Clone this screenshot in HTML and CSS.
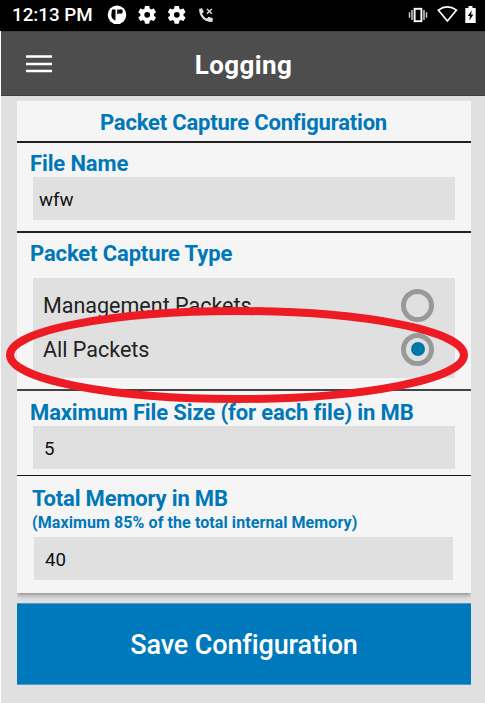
FILE: index.html
```html
<!DOCTYPE html>
<html lang="en">
<head>
<meta charset="utf-8">
<title>Logging</title>
<link rel="stylesheet" href="styles.css">
</head>
<body>
<div class="screen">
  <div class="status">
    <span class="clock">12:13 PM</span>
    <svg class="status-left" width="110" height="31" viewBox="0 0 110 31">
      <circle cx="10" cy="14.800" r="9.300" fill="#fff"/>
      <path d="M5 9.500h3.500v11c-2.500-.8-4.200-2.700-4.200-5.500zM10.200 9.500h1.500v4.500h-1.500z" fill="#000"/>
      <circle cx="13.500" cy="11.500" r="2.300" fill="#000"/>
      <g id="gear" transform="translate(29.400 4) scale(.9)">
        <path fill="#fff" d="M19.400 13c0-.3.100-.6.100-1s0-.7-.1-1l2.100-1.600c.2-.2.200-.4.100-.6l-2-3.500c-.1-.2-.4-.3-.6-.2l-2.500 1c-.5-.4-1.100-.7-1.700-1l-.4-2.600c0-.2-.2-.4-.5-.4h-4c-.2 0-.5.200-.5.400L9 5.100c-.6.300-1.100.6-1.700 1l-2.500-1c-.2-.1-.5 0-.6.200l-2 3.500c-.1.200-.1.500.1.600L4.500 11c0 .3-.1.700-.1 1s0 .7.100 1l-2.200 1.600c-.2.200-.2.400-.1.600l2 3.500c.1.200.4.300.6.200l2.500-1c.5.400 1.100.7 1.700 1l.4 2.600c0 .2.200.4.500.4h4c.2 0 .5-.2.500-.4l.4-2.600c.6-.3 1.100-.6 1.700-1l2.500 1c.2.100.5 0 .6-.2l2-3.500c.1-.2.100-.5-.1-.6zM12 15.200a3.200 3.200 0 1 1 0-6.400 3.200 3.200 0 0 1 0 6.400z"/>
      </g>
      <use href="#gear" x="29.600"/>
      <path fill="#ddd" d="M92.500 8.700l2.600-.5 1.700 3.800-1.700 1.500c1 2.500 2.500 4 4.700 5.100l1.800-1.800 4.300 1.500-.3 3c-.1.600-.5.800-1 .8-7.500-.5-12-5.500-12.500-12.200 0-.6 0-1 .4-1.200z"/>
      <path stroke="#ddd" stroke-width="1.400" d="M100 8.900l4.800 4.800M104.800 8.900l-4.800 4.800"/>
    </svg>
    <svg class="status-right" width="70" height="31" viewBox="0 0 70 31" fill="none">
      <rect x="6.600" y="8.800" width="6.800" height="12.400" stroke="#fff" stroke-width="1.900"/>
      <path d="M4 10v10M16 10v10M1.500 12.200v5.600M18.500 12.200v5.600" stroke="#ccc" stroke-width="1.500"/>
      <path d="M30.300 10.100q9.100-6.500 18.200 0L39.400 21z" stroke="#fff" stroke-width="1.600"/>
      <path d="M57.300 8h3.200V6h4v2h3.200v15H57.300z" fill="#fff"/>
      <path d="M63.800 10.200l-4 5.800h2.200l-.7 4.600 4.100-6.100h-2.300z" fill="#000"/>
    </svg>
  </div>
  <header class="bar">
    <svg class="menu" width="26" height="18" viewBox="0 0 26 18"><path d="M0 1.500h26M0 9h26M0 16h26" stroke="#fff" stroke-width="2.500"/></svg>
    <h1 class="title"><span>Logging</span></h1>
  </header>
  <main class="content">
    <div class="card">
      <h2 class="card-title"><span>Packet Capture Configuration</span></h2>
      <section class="name">
        <h3 class="label">File Name</h3>
        <div class="field first">wfw</div>
      </section>
      <section class="type">
        <h3 class="label">Packet Capture Type</h3>
        <div class="options">
          <div class="option"><span>Management Packets</span><i class="radio"></i></div>
          <div class="option"><span>All Packets</span><i class="radio on"></i></div>
        </div>
      </section>
      <section class="size">
        <h3 class="label">Maximum File Size (for each file) in MB</h3>
        <div class="field">5</div>
      </section>
      <section class="memory">
        <h3 class="label">Total Memory in MB</h3>
        <p class="hint">(Maximum 85% of the total internal Memory)</p>
        <div class="field">40</div>
      </section>
    </div>
    <button class="save">Save Configuration</button>
  </main>
  <svg class="annotation" width="464" height="98" viewBox="0 0 464 98"><ellipse cx="232" cy="49" rx="227" ry="44" fill="none" stroke="#ed1c24" stroke-width="8"/></svg>
</div>
</body>
</html>
```
FILE: styles.css
```css
* { box-sizing: border-box; }
body { margin: 0; background: #fff; font-family: Roboto, sans-serif; }
h1, h2, h3, p { margin: 0; white-space: nowrap; }
.screen { position: relative; height: 703px; overflow: hidden; display: flex; flex-direction: column; }
.status { height: 31px; flex: none; background: #000; color: #fff; display: flex; align-items: center; padding: 0 7px 0 12px; }
.clock { width: 95px; font-size: 18.8px; font-weight: 500; line-height: 33px; white-space: nowrap; }
.status-right { margin-left: auto; }
.bar { height: 65px; flex: none; margin-left: 1px; background: #4d4d4d; border-top: 1px solid #404040; border-bottom: 1px solid #403c40; display: flex; align-items: center; padding-left: 25px; }
.title { width: 385px; text-align: center; font-size: 26px; font-weight: 700; line-height: 34px; color: #fff; letter-spacing: .4px; margin-left: 0; padding-top: 3px; }
.menu { flex: none; margin-right: -1px; }
.content { flex: 1; margin-left: 1px; background: #e0e0e0; padding: 5px 14px 0 16px; }
.card { height: 492px; background: #f5f5f5; box-shadow: 0 2px 5px #0006; clip-path: inset(0 0 -10px 0); color: #0077b8; }
.card-title { height: 42px; border-bottom: 2px solid #231f20; text-align: center; font-size: 22px; font-weight: 700; letter-spacing: -.19px; line-height: 43px; padding-right: 1px; }
.label { font-size: 22px; font-weight: 700; letter-spacing: -.13px; line-height: 26px; padding-left: 13px; }
.name { height: 90px; border-bottom: 2px solid #231f20; padding-top: 8px; }
.type { height: 158px; border-bottom: 2px solid #444; padding-top: 8px; }
.size { height: 85px; border-bottom: 1px solid #111; padding-top: 9px; }
.memory { padding-top: 10px; }
.field { width: 422px; height: 43px; margin-left: 16px; padding-left: 11px; background: #e0e0e0; color: #111; font-size: 18.7px; line-height: 46px; }
.first { padding-left: 6px; }
.memory .label { padding-left: 15px; letter-spacing: -.18px; }
.memory .field { width: 419px; margin: 4px 0 0 17px; }
.hint { font-size: 16px; font-weight: 700; letter-spacing: .09px; line-height: 20px; padding-left: 15px; margin-top: 1px; }
.options { width: 422px; height: 100px; margin: 11px 0 0 16px; padding: 6px 21px 0 10px; background: #e0e0e0; color: #222; font-size: 21.5px; }
.option { height: 43.5px; display: flex; align-items: center; justify-content: space-between; white-space: nowrap; }
.radio { width: 33px; height: 33px; border: 5px solid #999; border-radius: 50%; display: flex; align-items: center; justify-content: center; }
.on::after { content: ""; width: 14px; height: 14px; border-radius: 50%; background: #0077a8; }
.save { display: block; width: 100%; height: 82px; margin-top: 10px; border: 0; border-top: 1px solid #4a9bc8; border-bottom: 1px solid #4a9bc8; background: #0079bc; color: #fff; font: 500 27px/82px Roboto, sans-serif; letter-spacing: -.12px; white-space: nowrap; position: relative; padding: 0; }
.annotation { position: absolute; left: 5px; top: 306px; }
```
